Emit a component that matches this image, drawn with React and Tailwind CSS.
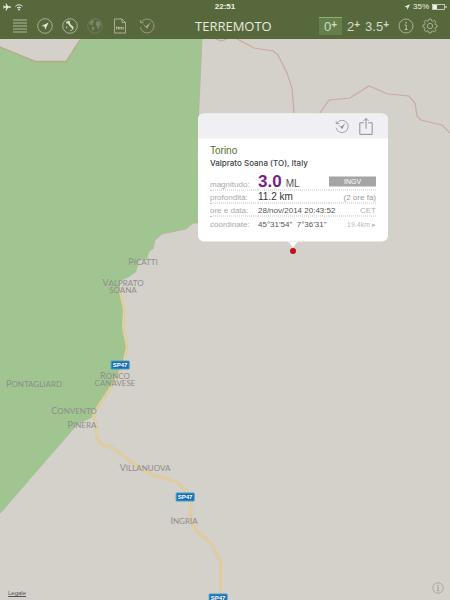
import React, { useState } from 'react'
import clsx from 'clsx'

const MAP = { top: 39, width: 450, height: 561 }

const places = [
  { name: "Picatti", x: 143, y: 262 },
  { name: "Valprato Soana", x: 123, y: 286, narrow: true },
  { name: "Ronco Canavese", x: 115, y: 379, narrow: true },
  { name: "Pontagliard", x: 34, y: 384 },
  { name: "Convento", x: 74, y: 411 },
  { name: "Pinera", x: 82, y: 425 },
  { name: "Villanuova", x: 145, y: 468 },
  { name: "Ingria", x: 184, y: 521 },
]

const shields = [
  { x: 120, y: 365 },
  { x: 185, y: 497 },
  { x: 218, y: 598 },
]

const filters = ["0", "2", "3.5"]

// map units -> percentages, so the pins follow the map when it resizes
const place = ({ x, y }) => ({
  left: `${(x / MAP.width) * 100}%`,
  top: `${((y - MAP.top) / MAP.height) * 100}%`,
})

const Icon = ({ children, className = "size-4" }) => (
  <svg viewBox="0 0 16 16" className={className} fill="none" stroke="currentColor" strokeWidth="0.8" aria-hidden="true">
    {children}
  </svg>
)

const HistoryPaths = () => (
  <>
    <path d="M1.9 4.6A7 7 0 1 1 1.2 9.4M1.2 1.8l.5 3.1 3.2-.3" />
    <path d="M4.6 6.6l3.3 3.6 3.2-5.6M7.9 10.2l.2-2.4" />
    <path d="M6.7 8.2l3.6-2.5-2.2 4.4z" fill="currentColor" stroke="none" />
  </>
)

const InfoPaths = () => (
  <>
    <circle cx="8" cy="8" r="7" />
    <circle cx="8" cy="4.8" r="0.8" fill="currentColor" stroke="none" />
    <path d="M6.8 7h1.4v4.4M6.6 11.5h3" strokeWidth="1" />
  </>
)

const StatusBar = () => (
  <div className="grid h-[13px] grid-cols-3 items-center px-[3px] text-[8px] leading-none font-bold text-[#eef0e8]">
    <div className="flex items-center gap-1">
      <svg viewBox="0 0 8 8" className="size-2" fill="currentColor" aria-label="Airplane">
        <path d="M8 4c0-.5-.5-.7-1-.7H5.1L3.3.6h-.8l.8 2.7H1.6L.8 2.4H.2L.6 4 .2 5.600h.6l.8-.9h1.7l-.8 2.700h.8l1.800-2.700H7c.5 0 1-.2 1-.7z" />
      </svg>
      <svg viewBox="0 0 8 8" className="size-2" fill="none" stroke="currentColor" aria-label="Wi-Fi">
        <path d="M.5 3.300c2-2 5-2 7 0M2 5c1.200-1.100 2.800-1.100 4 0" />
        <circle cx="4" cy="6.500" r=".9" fill="currentColor" stroke="none" />
      </svg>
    </div>
    <div className="text-center">22:51</div>
    <div className="flex items-center justify-end gap-[3px]">
      <svg viewBox="0 0 8 8" className="size-[6px]" fill="currentColor" aria-hidden="true">
        <path d="M8 .4L.4 3.600l3.600.6.5 3.600z" />
      </svg>
      <span className="font-normal">35%</span>
      <svg viewBox="0 0 15 6" className="h-[6px] w-[15px]" aria-label="Battery">
        <rect x=".5" y=".5" width="12" height="5" fill="none" stroke="currentColor" strokeWidth=".7" />
        <rect x="1" y="1" width="4" height="4" fill="currentColor" />
        <path d="M13.500 2v2h1V2z" fill="currentColor" />
      </svg>
    </div>
  </div>
)

const Toolbar = () => {
  const [active, setActive] = useState("0")

  return (
    <div className="flex h-[26px] items-center px-3 text-[#b9c2a6]">
      <div className="flex items-center gap-[9px]">
        <button aria-label="Elenco">
          <Icon>
            <path d="M1 2h14M1 5h14M1 8h14M1 11h14M1 14h14" strokeWidth="0.9" />
          </Icon>
        </button>
        <button aria-label="Posizione">
          <Icon>
            <circle cx="8" cy="8" r="7.300" />
            <path d="M11.600 4.400L4.400 7.900l3.200.6.6 3.200z" fill="#e3e7da" stroke="none" />
          </Icon>
        </button>
        <button aria-label="Italia">
          <Icon>
            <circle cx="8" cy="8" r="7.300" />
            <path d="M4 4l2-1.300 2.200.3-.5 1.600 1.300 2.100 3 2.500-.8.400.2 1.700-1 .6-.6-1.700L7.300 7.800 5.800 5.500l-1.600-.1z" fill="#d6dcca" stroke="none" />
            <path d="M7.500 12l2.400-.2-.4 1.200zM4.200 8.600l.9-.2.1 2-.9.2z" fill="#d6dcca" stroke="none" />
          </Icon>
        </button>
        <button aria-label="Mondo" className="text-[#7d8967]">
          <Icon>
            <circle cx="8" cy="8" r="7.300" strokeWidth="0.6" />
            <path d="M3 4l2-1.700 2.200.2-.5 1.600L5.300 5.600l.7 1.400-1.500.3L2.600 6zM5.200 8.600l2.300 1-.5 2-1.200 1.700-.9-2.200zM9.200 3.600l2.600-.7 1.700 2.400.2 2.500-1.600-.2.200 2.500-1.400 1.200-.8-2.800L8.900 7z" fill="currentColor" stroke="none" />
          </Icon>
        </button>
        <button aria-label="KML">
          <Icon>
            <path d="M2.500 1h7.500l3.500 3.500V15h-11zM10 1v3.500h3.500" />
            <path d="M4.500 11.500V8.800l1 1.200 1-1.200v2.700M7.800 11.500V9l1 1.200 1-1.200v2.500M11.300 8.900v2.600" strokeWidth="0.9" />
          </Icon>
        </button>
        <button aria-label="Cronologia" className="ml-[2px] text-[#a0ab8b]">
          <Icon>
            <HistoryPaths />
          </Icon>
        </button>
      </div>

      <h1 className="flex-1 pl-10 font-['Open_Sans',sans-serif] text-[13px] leading-none text-[#e6eadf]">TERREMOTO</h1>

      <div className="flex items-center justify-end">
        {filters.map((value) => (
          <button
            key={value}
            onClick={() => setActive(value)}
            className={clsx(
              "flex h-[18px] items-center border-t px-[5px] text-[13px] leading-none text-[#d3dac6]",
              active === value ? "border-[#8db26a] bg-[#667f4a]" : "border-transparent",
              value === "3.5" && "pl-0"
            )}
          >
            {value}
            <span className="mb-1 text-[10px] font-bold">+</span>
          </button>
        ))}
        <button aria-label="Info" className="ml-1">
          <Icon>
            <InfoPaths />
          </Icon>
        </button>
        <button aria-label="Impostazioni" className="ml-2">
          <Icon>
            <path d="M6.900 1h2.200l.4 1.800 1.300.5 1.600-1 1.500 1.500-1 1.600.5 1.300 1.700.4v2l-1.700.4-.5 1.300 1 1.600-1.500 1.500-1.600-1-1.300.5L9.100 15H6.900l-.4-1.800-1.300-.5-1.600 1-1.500-1.500 1-1.600-.5-1.300L.9 9V7l1.700-.4.5-1.300-1-1.600 1.500-1.500 1.600 1 1.300-.5z" />
            <circle cx="8" cy="8" r="2.700" />
          </Icon>
        </button>
      </div>
    </div>
  )
}

const ROAD = "M120 291l4 19-1 17 4 20-4 18-8 16-16 24-6 9 3 10 1 14 4 6 12 4 21 16 18 11 12 3 14 5 9 9 4 7v22l5 10 15 12 4 8 6 11v38"

const MapDrawing = () => (
  <svg viewBox="0 39 450 561" preserveAspectRatio="none" className="absolute inset-0 h-full w-full" fill="none" aria-hidden="true">
    {/* park */}
    <path d="M0 47L36 61.500H66L80 40V39H202L199 106 197 158 199 170V223L193 223 186 229 162 234 155 240 153 249 149 252 147 259 139 261 136 272 129 277 120 281V295L124 310 124 333 127 347 123 365 115 381 99 407 91 418 78 424 0 514z" fill="#a0c590" />
    <path d="M0 47L36 61.500H66L80 40" stroke="#b9a98a" strokeWidth="1.300" />
    <path d="M202 39L199 106 197 158 199 170V223L193 223 186 229 162 234 155 240 153 249" stroke="#b3b4a0" strokeWidth="0.800" />

    {/* municipal borders */}
    <g stroke="#c9aaa1" strokeWidth="1.200">
      <path d="M216 39l5 2 6-2M237 39l17 9 19 3 5 4 9 18 5 15 2 25M320 113l9-13 21-2 19-12 19 8 21 2 6 7 2 13 4 4 21 5 8 8" />
    </g>

    {/* SP47 */}
    <path d={ROAD} stroke="#dfc68c" strokeWidth="2.500" strokeLinejoin="round" />
    <path d={ROAD} stroke="#e6d5ac" strokeWidth="1" strokeLinejoin="round" />
  </svg>
)

const Row = ({ label, children, extra, last }) => (
  <tr className={clsx("h-[13px]", !last && "border-b border-dotted border-[#c4c4c4]")}>
    <th scope="row" className="w-12 p-0 text-left align-bottom leading-[11px] font-normal text-[#a9a9a9]">{label}</th>
    <td className="p-0 align-bottom leading-[11px] whitespace-pre text-[#555]">{children}</td>
    <td className="w-[47px] p-0 text-right align-bottom leading-[11px] whitespace-nowrap text-[#999]">{extra}</td>
  </tr>
)

const QuakePopup = () => (
  <div className="w-[190px]">
    <div className="overflow-hidden rounded-md bg-white">
      <div className="flex h-[25px] items-center justify-end gap-2 bg-[#efeff4] pr-[13px] text-[#85858a]">
        <button aria-label="Cronologia">
          <Icon className="size-[14px]">
            <HistoryPaths />
          </Icon>
        </button>
        <button aria-label="Condividi">
          <Icon className="size-[18px]">
            <path d="M6 4.700H2.500V15h11V4.700H10M8 10V1M5.800 3L8 .8 10.200 3" />
          </Icon>
        </button>
      </div>

      <div className="px-3 pt-[5px] pb-3 text-[8px]">
        <h2 className="text-[10px] leading-[14px] font-medium text-[#55702f]">Torino</h2>
        <p className="font-['Inter',sans-serif] leading-[11px] font-medium text-[#444]">Valprato Soana (TO), Italy</p>

        <table className="mt-1 w-full table-fixed border-collapse">
          <tbody>
            <Row
              label="magnitudo:"
              extra={<span className="mb-[3px] block bg-[#a5a5a5] text-center text-[7px] leading-[10px] text-white">INGV</span>}
            >
              <b className="text-[17px] leading-[17px] text-[#7b1d86]">3.0</b>
              <span className="ml-1 text-[10px]">ML</span>
            </Row>
            <Row label="profondità:" extra="(2 ore fa)">
              <span className="text-[10px] text-[#333]">11.2 km</span>
            </Row>
            <Row label="ore e data:" extra={<span className="text-[#b0b0b0]">CET</span>}>28/nov/2014 20:43:52</Row>
            <Row label="coordinate:" extra={<span className="text-[7px] text-[#bbb]">19.4km ▸</span>} last>{`45°31'54"  7°36'31"`}</Row>
          </tbody>
        </table>
      </div>
    </div>
    <svg viewBox="0 0 14 6" className="mx-auto h-[6px] w-[14px]" fill="#fff" aria-hidden="true">
      <path d="M0 0h14c-3 0-4 2-5 3.500C8.300 5 7.600 6 7 6s-1.300-1-2-2.500C4 2 3 0 0 0z" />
    </svg>
  </div>
)

const App = () => {
  return (
    <div className="flex min-h-screen flex-col bg-[#d4d1ca] font-['Liberation_Sans',Arial,sans-serif]">
      <header className="bg-[#58683d]">
        <StatusBar />
        <Toolbar />
      </header>

      <main className="relative flex-1 overflow-hidden">
        <MapDrawing />

        {places.map((p) => (
          <span
            key={p.name}
            style={place(p)}
            className={clsx(
              "absolute block -translate-x-1/2 -translate-y-1/2 text-center font-['Lato',sans-serif] text-[8px] leading-[7px] text-[#8f8d8c] uppercase first-letter:text-[9px]",
              p.narrow ? "w-12" : "whitespace-nowrap"
            )}
          >
            {p.name}
          </span>
        ))}

        {shields.map((s) => (
          <span
            key={s.y}
            style={place(s)}
            className="absolute -translate-x-1/2 -translate-y-1/2 rounded-[1px] border border-[#3f9fd0] bg-[#1b6fae] px-px text-[6px] leading-[7px] font-bold text-white"
          >
            SP47
          </span>
        ))}

        {/* epicentre */}
        <span style={place({ x: 293, y: 251 })} className="absolute size-[6px] -translate-x-1/2 -translate-y-1/2 rounded-full bg-[#c01018]" />
        <div style={place({ x: 293, y: 247 })} className="absolute -translate-x-1/2 -translate-y-full">
          <QuakePopup />
        </div>

        <a href="#legale" className="absolute bottom-1 left-2 text-[6px] leading-[6px] text-[#555] underline">Legale</a>
        <button aria-label="Info mappa" className="absolute right-[6px] bottom-[6px] text-[#8b9279]">
          <Icon className="size-3">
            <InfoPaths />
          </Icon>
        </button>
      </main>
    </div>
  )
}

export default App
